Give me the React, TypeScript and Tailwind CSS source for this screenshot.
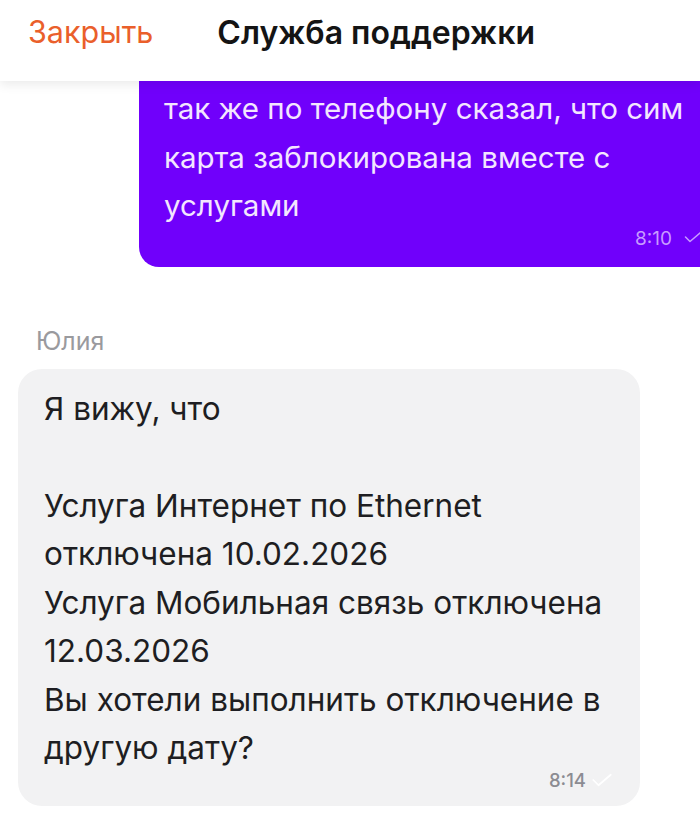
import React from "react";

function Check({ className }: { className: string }) {
  return (
    <svg className={className} viewBox="0 0 24 16" fill="none" stroke="currentColor" strokeWidth={2} strokeLinecap="round" strokeLinejoin="round">
      <path d="M2 8l6 6L22 2" />
    </svg>
  );
}

export default function App() {
  const font = { fontFamily: "Inter, Roboto, 'Noto Sans', sans-serif" };
  return (
    <div className="w-[700px] h-[837px] overflow-hidden bg-white relative" style={font}>
      {/* Header */}
      <div className="relative z-10 h-[81px] bg-white flex items-center shadow-[0_4px_10px_rgba(0,0,0,0.08)]">
        <button className="ml-[28px] text-[30.5px] text-[#ea5f2b] leading-none pb-[16px]">Закрыть</button>
        <h1 className="ml-[64px] text-[32px] font-semibold text-[#141414] leading-none pb-[16px]">Служба поддержки</h1>
      </div>

      {/* Outgoing bubble (scrolled, top hidden) */}
      <div className="ml-[139px] w-[620px] bg-[#7000fb] rounded-bl-[20px] pl-[25px] pt-[3px] pb-[16px]">
        <p className="text-[29.5px] leading-[48.5px] text-[#f3e6ff] whitespace-nowrap">так же по телефону сказал, что сим</p>
        <p className="text-[29.5px] leading-[48.5px] text-[#f3e6ff]">карта заблокирована вместе с</p>
        <p className="text-[29.5px] leading-[48.5px] text-[#f3e6ff]">услугами</p>
        <div className="flex items-center w-[508px] justify-end -mt-[3px]">
          <span className="text-[19px] text-[#c79bff] leading-[24px]">8:10</span>
        </div>
      </div>
      <Check className="absolute left-[684px] top-[231px] w-[18px] h-[12px] text-[#c79bff]" />

      {/* Incoming */}
      <div className="mt-[61px] ml-[36px] text-[25px] text-[#9a9a9e] leading-[26px]">Юлия</div>
      <div className="mt-[15px] ml-[18px] w-[622px] bg-[#f2f2f3] rounded-[24px] pl-[26px] pr-[10px] pt-[16px] pb-[15px]">
        <div className="text-[31.5px] leading-[48.5px] text-[#1e1e22]">
          <p>Я вижу, что</p>
          <p>&nbsp;</p>
          <p>Услуга Интернет по Ethernet</p>
          <p>отключена 10.02.2026</p>
          <p>Услуга Мобильная связь отключена</p>
          <p>12.03.2026</p>
          <p>Вы хотели выполнить отключение в</p>
          <p>другую дату?</p>
        </div>
        <div className="flex items-center justify-end gap-[4px] -mt-[4px] pr-[16px]">
          <span className="text-[18.5px] font-medium text-[#8c8c92] leading-[22px]">8:14</span>
          <Check className="w-[24px] h-[14px] text-white" />
        </div>
      </div>
    </div>
  );
}
